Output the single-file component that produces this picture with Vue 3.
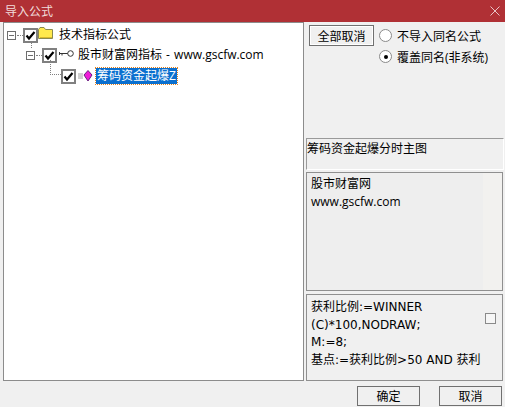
<script setup>
const noteLines = ['股市财富网', 'www.gscfw.com']
const codeLines = ['获利比例:=WINNER', '(C)*100,NODRAW;', 'M:=8;', '基点:=获利比例>50 AND 获利']
</script>

<template>
  <div class="dialog">
    <div class="titlebar">
      <span class="title">导入公式</span>
      <svg class="close" width="10" height="10" viewBox="0 0 10 10">
        <path d="M0.5 0.5L9.5 9.5M9.5 0.5L0.5 9.5" stroke="#e8c4c6" stroke-width="1" fill="none" />
      </svg>
    </div>

    <div class="body">
      <div class="tree">
        <div class="row row-root">
          <span class="expander"></span>
          <span class="dots-h"></span>
          <span class="check"><svg width="11" height="11" viewBox="0 0 11 11"><path d="M1.5 5.5L4 8.5L9.5 2" stroke="#000" stroke-width="2.2" fill="none" /></svg></span>
          <svg class="icon-folder" width="16" height="14" viewBox="0 0 16 14">
            <path d="M0.5 3.5L2 1.5H6L7.5 3.5H14.5V12.5H0.5Z" fill="#ffe94d" stroke="#8a8a50" />
            <path d="M2 11.5H14" stroke="#d9b92e" />
          </svg>
          <span class="label">技术指标公式</span>
        </div>
        <div class="row row-author">
          <span class="expander"></span>
          <span class="dots-h"></span>
          <span class="check"><svg width="11" height="11" viewBox="0 0 11 11"><path d="M1.5 5.5L4 8.5L9.5 2" stroke="#000" stroke-width="2.2" fill="none" /></svg></span>
          <svg class="icon-key" width="15" height="8" viewBox="0 0 15 8">
            <path d="M0.5 2V5M0.5 3.5H9M3 3.5V5.5" stroke="#333" fill="none" />
            <circle cx="11.5" cy="3.5" r="2.8" stroke="#333" fill="#fff" />
          </svg>
          <span class="label label-author">股市财富网指标 - www.gscfw.com</span>
        </div>
        <div class="row row-formula">
          <span class="check"><svg width="11" height="11" viewBox="0 0 11 11"><path d="M1.5 5.5L4 8.5L9.5 2" stroke="#000" stroke-width="2.2" fill="none" /></svg></span>
          <svg class="icon-gem" width="16" height="12" viewBox="0 0 16 12">
            <path d="M1 4H6M1 6H6M1 8H6" stroke="#a0a0a0" />
            <path d="M11 0.5L15 5L11 11L7 5Z" fill="#f01cd8" stroke="#6a2080" />
          </svg>
          <span class="label selected">筹码资金起爆Z</span>
        </div>
        <span class="link link-a"></span>
        <span class="link link-b"></span>
        <span class="link link-c"></span>
      </div>

      <div class="side">
        <div class="side-top">
          <button class="btn btn-all">全部取消</button>
          <div class="radios">
            <div class="radio-row"><span class="radio"></span>不导入同名公式</div>
            <div class="radio-row"><span class="radio on"></span>覆盖同名(非系统)</div>
          </div>
        </div>
        <div class="name-box">筹码资金起爆分时主图</div>
        <div class="note-box">
          <div v-for="line in noteLines" :key="line">{{ line }}</div>
        </div>
        <div class="code-box">
          <div class="code-text">
            <div v-for="line in codeLines" :key="line" class="code-line">{{ line }}</div>
          </div>
          <span class="mini-check"></span>
        </div>
      </div>
    </div>

    <div class="footer">
      <button class="btn btn-ok">确定</button>
      <button class="btn btn-cancel">取消</button>
    </div>
  </div>
</template>

<style>
html, body {
  margin: 0;
  background: #f0f0f0;
}
</style>

<style scoped>
.dialog {
  width: 505px;
  height: 407px;
  display: flex;
  flex-direction: column;
  background: #f0f0f0;
  font-family: "Open Sans", "Noto Sans CJK SC", sans-serif;
  font-size: 12px;
  color: #000;
  overflow: hidden;
}

.titlebar {
  height: 22px;
  flex: none;
  background: #b03035;
  display: flex;
  align-items: center;
  justify-content: space-between;
  padding: 0 5px 0 5px;
}

.title {
  color: #f0dcdc;
  font-size: 12px;
}

.body {
  height: 359px;
  flex: none;
  display: flex;
  padding-left: 3px;
}

.tree {
  position: relative;
  width: 299px;
  height: 357px;
  flex: none;
  border: 1px solid #8c8c8c;
  background: #fff;
}

.row {
  height: 20px;
  display: flex;
  align-items: center;
  white-space: nowrap;
}

.row-root {
  margin-top: 2px;
  padding-left: 3px;
}

.row-author {
  padding-left: 22px;
}

.row-formula {
  padding-left: 58px;
  margin-top: 1px;
}

.expander {
  width: 7px;
  height: 7px;
  flex: none;
  border: 1px solid #6e6e6e;
  background: linear-gradient(#6e6e6e, #6e6e6e) center / 5px 1px no-repeat;
}

.dots-h {
  width: 6px;
  height: 0;
  flex: none;
  margin: 0 1px;
  border-top: 1px dotted #808080;
}

.check {
  width: 11px;
  height: 11px;
  flex: none;
  border: 1px solid #808080;
  outline: 1px solid #808080;
  background: #fff;
  display: flex;
}

.icon-folder {
  margin-left: 1px;
  margin-bottom: 5px;
}

.icon-key {
  margin-left: 3px;
  margin-bottom: 2px;
}

.icon-gem {
  margin-left: 2px;
}

.label {
  margin-left: 5px;
  font-size: 12px;
  line-height: 16px;
}

.label-author {
  margin-left: 4px;
  word-spacing: 1px;
}

.selected {
  margin-left: 3px;
  padding: 0 1px;
  background: #0a6fcf;
  color: #fff;
  outline: 1px dotted #e08020;
  font-size: 12px;
}

.link {
  position: absolute;
}

.link-a {
  left: 27px;
  top: 18px;
  height: 7px;
  border-left: 1px dotted #808080;
}

.link-b {
  left: 46px;
  top: 37px;
  height: 13px;
  border-left: 1px dotted #808080;
}

.link-c {
  left: 46px;
  top: 51px;
  width: 11px;
  border-top: 1px dotted #808080;
}

.side {
  flex: 1;
  display: flex;
  flex-direction: column;
  padding-left: 2px;
  min-width: 0;
}

.side-top {
  height: 116px;
  flex: none;
  box-sizing: border-box;
  display: flex;
  align-items: flex-start;
  padding-left: 3px;
  padding-top: 3px;
}

.btn {
  padding: 0;
  border: 1px solid #707070;
  background: #f0f0f0;
  font: inherit;
  color: #000;
}

.btn-all {
  width: 65px;
  height: 21px;
  box-shadow: inset 0 0 0 1px #fff;
}

.radios {
  margin-left: 5px;
}

.radio-row {
  height: 21px;
  display: flex;
  align-items: center;
  gap: 5px;
  white-space: nowrap;
}

.radio {
  position: relative;
  width: 11px;
  height: 11px;
  flex: none;
  border-radius: 50%;
  border: 1px solid #8a8a8a;
  background: #fff;
}

.radio.on::after {
  content: "";
  position: absolute;
  left: 3.5px;
  top: 3.5px;
  width: 4px;
  height: 4px;
  border-radius: 50%;
  background: #000;
}

.name-box {
  height: 32px;
  flex: none;
  box-sizing: border-box;
  margin-right: 1px;
  border-top: 1px solid #9a9a9a;
  border-left: 1px solid #9a9a9a;
  border-right: 1px solid #fff;
  border-bottom: 1px solid #fff;
  line-height: 19px;
}

.note-box {
  height: 119px;
  flex: none;
  box-sizing: border-box;
  margin: 2px 2px 0 0;
  padding: 2px 4px;
  border: 1px solid #8f8f8f;
  background: linear-gradient(90deg, #eeeeee 176px, #f2f1ef 176px);
  line-height: 18px;
}

.code-box {
  height: 87px;
  flex: none;
  box-sizing: border-box;
  margin: 3px 2px 0 0;
  padding: 4px 4px;
  border: 1px solid #8f8f8f;
  display: flex;
  justify-content: space-between;
  font-family: "DejaVu Sans", "Noto Sans CJK SC", sans-serif;
}

.code-text {
  width: 172px;
  line-height: 17.5px;
}

.code-line {
  white-space: nowrap;
}

.mini-check {
  width: 9px;
  height: 9px;
  margin-top: 14px;
  margin-right: 2px;
  flex: none;
  border: 1px solid #8a8a8a;
  background: #f6f6f6;
}

.footer {
  flex: 1;
  display: flex;
  justify-content: flex-end;
  padding: 5px 3px 0 0;
  gap: 19px;
}

.btn-ok,
.btn-cancel {
  width: 63px;
  height: 20px;
  border: 1px solid #707070;
}
</style>
